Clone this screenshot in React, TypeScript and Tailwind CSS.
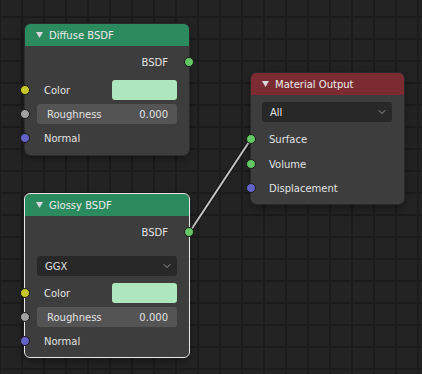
import { ChevronDown } from "lucide-react";
import type { ReactNode } from "react";

type Kind = "shader" | "color" | "float" | "vector";

const socketColor: Record<Kind, string> = {
  shader: "bg-[#63c763]",
  color: "bg-[#c7c729]",
  float: "bg-[#a1a1a1]",
  vector: "bg-[#6363c7]",
};

function Socket({ kind, side }: { kind: Kind; side: "in" | "out" }) {
  return (
    <span
      className={`absolute top-1/2 h-[10px] w-[10px] -translate-y-1/2 rounded-full border border-[#1a1a1a] ${
        socketColor[kind]
      } ${side === "in" ? "left-[-5px]" : "right-[-5px]"}`}
    />
  );
}

function Node({
  title,
  header,
  selected,
  className,
  children,
}: {
  title: string;
  header: string;
  selected?: boolean;
  className: string;
  children: ReactNode;
}) {
  return (
    <div
      className={`absolute flex flex-col rounded-[5px] bg-[#3d3d3d] shadow-[0_3px_8px_rgba(0,0,0,0.45)] ${
        selected ? "outline outline-1 outline-[#e8e8e8]" : "outline outline-1 outline-[#2a2a2a]"
      } ${className}`}
    >
      <div className={`flex h-[22px] items-center rounded-t-[5px] pl-[11px] text-[#ececec] ${header}`}>
        <svg width="7" height="6" viewBox="0 0 7 6" className="mr-[6px]">
          <polygon points="0,0 7,0 3.5,6" fill="#d8d8d8" />
        </svg>
        <span>{title}</span>
      </div>
      {children}
    </div>
  );
}

function OutputRow({ label, className = "" }: { label: string; className?: string }) {
  return (
    <div className={`relative flex h-[20px] items-center justify-end pr-[21px] ${className}`}>
      <span>{label}</span>
      <Socket kind="shader" side="out" />
    </div>
  );
}

function LabelRow({ label, kind, className = "" }: { label: string; kind: Kind; className?: string }) {
  return (
    <div className={`relative flex h-[20px] items-center pl-[19px] ${className}`}>
      <span>{label}</span>
      <Socket kind={kind} side="in" />
    </div>
  );
}

function ColorRow({ className = "" }: { className?: string }) {
  return (
    <div className={`relative flex h-[20px] items-center pl-[19px] pr-[12px] ${className}`}>
      <span className="flex-1">Color</span>
      <span className="h-[20px] w-[65px] rounded-[3px] bg-[#aee6bd]" />
      <Socket kind="color" side="in" />
    </div>
  );
}

function RoughnessRow({ className = "" }: { className?: string }) {
  return (
    <div className={`relative h-[20px] px-[12px] ${className}`}>
      <div className="flex h-full items-center justify-between rounded-[3px] bg-[#545454] pl-[10px] pr-[9px]">
        <span>Roughness</span>
        <span>0.000</span>
      </div>
      <Socket kind="float" side="in" />
    </div>
  );
}

function Dropdown({ value, className = "" }: { value: string; className?: string }) {
  return (
    <div
      className={`flex h-[20px] items-center justify-between rounded-[3px] bg-[#282828] pl-[8px] pr-[4px] ${className}`}
    >
      <span>{value}</span>
      <ChevronDown size={12} strokeWidth={1.6} className="text-[#b5b5b5]" />
    </div>
  );
}

export default function App() {
  return (
    <div
      className="relative h-[374px] w-[422px] overflow-hidden bg-[#232323] bg-[linear-gradient(to_right,#1b1b1b_2px,transparent_2px),linear-gradient(to_bottom,#1b1b1b_2px,transparent_2px)] bg-[size:22px_22px] bg-[position:-1px_16px] text-[10px] text-[#e2e2e2]"
      style={{ fontFamily: '"DejaVu Sans", sans-serif' }}
    >
      {/* Link */}
      <svg className="absolute inset-0" width="422" height="374">
        <line x1="189" y1="233" x2="251" y2="139" stroke="#151515" strokeWidth="4" />
        <line x1="189" y1="233" x2="251" y2="139" stroke="#c4c4c4" strokeWidth="2" />
      </svg>

      {/* Diffuse BSDF */}
      <Node title="Diffuse BSDF" header="bg-[#2b8a5e]" className="left-[25px] top-[24px] w-[164px] pb-[7px]">
        <OutputRow label="BSDF" className="mt-[6px]" />
        <ColorRow className="mt-[8px]" />
        <RoughnessRow className="mt-[4px]" />
        <LabelRow label="Normal" kind="vector" className="mt-[4px]" />
      </Node>

      {/* Material Output */}
      <Node title="Material Output" header="bg-[#7d2b33]" className="left-[251px] top-[73px] w-[153px] pb-[6px]">
        <div className="mt-[7px] pl-[11px] pr-[12px]">
          <Dropdown value="All" />
        </div>
        <LabelRow label="Surface" kind="shader" className="mt-[7px] !pl-[18px]" />
        <LabelRow label="Volume" kind="shader" className="mt-[5px] !pl-[18px]" />
        <LabelRow label="Displacement" kind="vector" className="mt-[4px] !pl-[18px]" />
      </Node>

      {/* Glossy BSDF */}
      <Node title="Glossy BSDF" header="bg-[#2b8a5e]" selected className="left-[25px] top-[194px] w-[164px] pb-[6px]">
        <OutputRow label="BSDF" className="mt-[6px]" />
        <div className="mt-[14px] px-[12px]">
          <Dropdown value="GGX" />
        </div>
        <ColorRow className="mt-[7px]" />
        <RoughnessRow className="mt-[4px]" />
        <LabelRow label="Normal" kind="vector" className="mt-[4px]" />
      </Node>
    </div>
  );
}
